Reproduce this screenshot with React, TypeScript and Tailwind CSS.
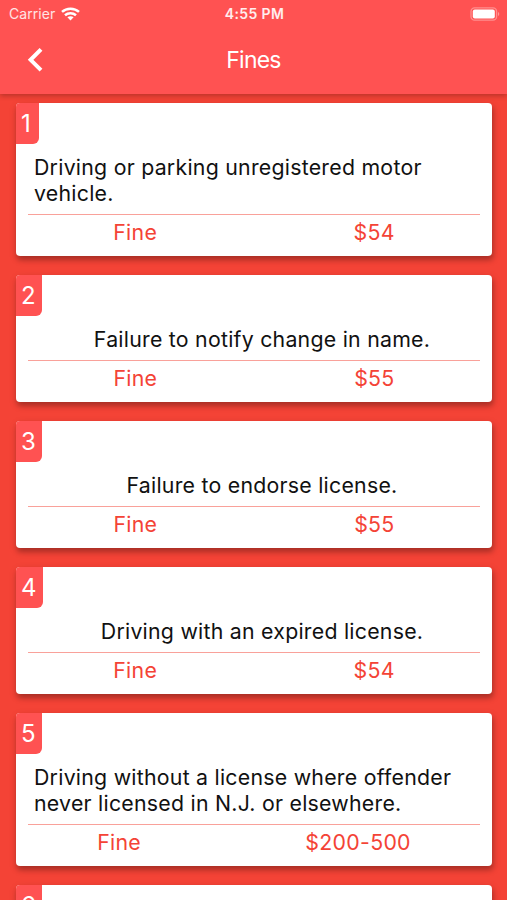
import React from 'react';

interface FineItem {
  id: number;
  description?: string;
  amount?: string;
}

const fines: FineItem[] = [
  { id: 1, description: 'Driving or parking unregistered motor vehicle.', amount: '$54' },
  { id: 2, description: 'Failure to notify change in name.', amount: '$55' },
  { id: 3, description: 'Failure to endorse license.', amount: '$55' },
  { id: 4, description: 'Driving with an expired license.', amount: '$54' },
  {
    id: 5,
    description: 'Driving without a license where offender never licensed in N.J. or elsewhere.',
    amount: '$200-500',
  },
  { id: 6 },
];

function StatusBar() {
  return (
    <div className="grid h-[27px] grid-cols-3 items-center pr-[7px] pl-[9px]">
      <div className="flex items-center gap-[6px] text-[14px] text-white/85">
        <span className="tracking-[0.05px]">Carrier</span>
        <svg width="19" height="14" viewBox="0 0 19 14" fill="none" stroke="white" strokeWidth="2.5">
          <path d="M1 4.9C5.6.6 13.4.6 18 4.9" />
          <path d="M4 8.3c3.1-2.8 7.9-2.8 11 0" />
          <path d="M9.5 13.4 6.4 10.3c1.8-1.5 4.4-1.5 6.2 0z" fill="white" stroke="none" />
        </svg>
      </div>
      <div className="text-center text-[14px] font-semibold tracking-[0.4px] text-white/90">4:55 PM</div>
      <div className="flex justify-end">
        <svg width="30" height="14" viewBox="0 0 30 14" fill="none">
          <rect x="1" y=".8" width="25.6" height="12.4" rx="3.6" stroke="white" strokeOpacity=".35" strokeWidth="1.3" />
          <rect x="2.8" y="2.6" width="22" height="8.8" rx="2" fill="white" />
          <path d="M28 5v4c1.7-.7 1.7-3.3 0-4z" fill="white" fillOpacity=".4" />
        </svg>
      </div>
    </div>
  );
}

function Header() {
  return (
    <header className="relative z-10 h-[94px] shrink-0 bg-[#ff5252] text-white shadow-[0_2px_5px_rgba(0,0,0,0.24)]">
      <StatusBar />
      <div className="grid h-[67px] grid-cols-3 items-center">
        <button className="ml-[27px] w-4" aria-label="Back">
          <svg width="16" height="25" viewBox="0 0 16 25" fill="none" stroke="white" strokeWidth="4">
            <path d="M14 1.4 3.6 11.8 14 22.2" />
          </svg>
        </button>
        <h1 className="text-center text-[23px] tracking-[-0.8px]">Fines</h1>
      </div>
    </header>
  );
}

function FineCard({ item }: { item: FineItem }) {
  return (
    <div className="flex flex-col items-start rounded-[4px] bg-white pb-[10px] shadow-[1px_4px_5px_rgba(0,0,0,0.2),1px_3px_8px_rgba(0,0,0,0.16)]">
      <div className="flex h-[41px] min-w-[23px] items-center rounded-tl-[4px] rounded-br-[6px] bg-[#ff5252] pr-[6px] pl-[5px] text-2xl text-white">
        {item.id}
      </div>
      {item.description && (
        <>
          <div className="flex w-full justify-center pt-[10px] pr-[2px] pl-[18px]">
            <p className="text-[21.3px] leading-[26px] tracking-[0.25px] text-[#111]">{item.description}</p>
          </div>
          <div className="mt-[8px] h-px w-[452px] self-center bg-[#f44336]/50"></div>
          <div className="flex w-[452px] justify-around gap-[26px] self-center pt-[3px] text-[21.3px] leading-[28px] tracking-[0.3px] text-[#f44336]">
            <span>Fine</span>
            <span>{item.amount}</span>
          </div>
        </>
      )}
    </div>
  );
}

export default function App() {
  return (
    <div className="flex h-[900px] w-[507px] flex-col overflow-hidden bg-[#f44336] font-[Inter,sans-serif]">
      <Header />
      <main className="flex flex-col gap-[19px] pt-[9px] pr-[15px] pl-[16px]">
        {fines.map((item) => (
          <FineCard key={item.id} item={item} />
        ))}
      </main>
    </div>
  );
}
